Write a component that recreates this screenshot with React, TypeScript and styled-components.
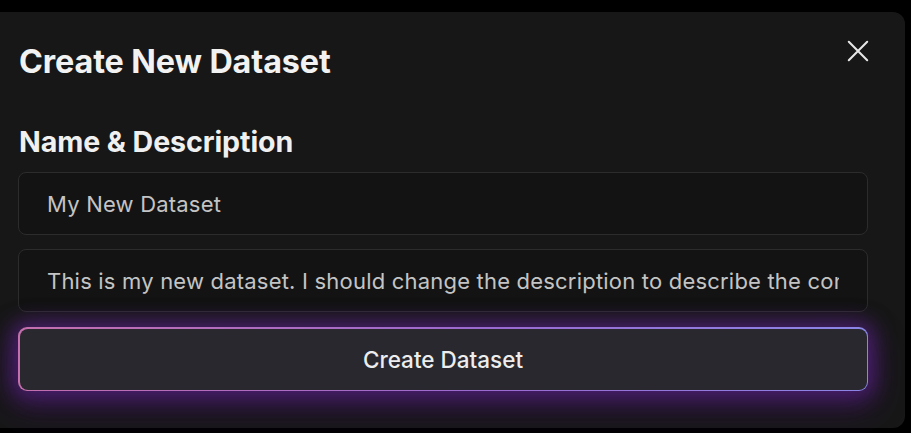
import React from "react";
import styled, { createGlobalStyle } from "styled-components";

const Global = createGlobalStyle`
  html, body { margin: 0; padding: 0; background: #000; }
  body { font-family: Inter, "Noto Sans", sans-serif; overflow: hidden; }
  * { box-sizing: border-box; }
`;

const Page = styled.div`
  width: 911px;
  height: 433px;
  padding-top: 12px;
  background: #000;
  overflow: hidden;
`;

const Card = styled.div`
  margin-left: -12px;
  width: 917px;
  height: 416px;
  background: #171717;
  border-radius: 12px;
  padding: 30px 37px 0 30px;
  display: flex;
  flex-direction: column;
`;

const Header = styled.div`
  display: flex;
  justify-content: space-between;
  align-items: flex-start;
`;

const Title = styled.h1`
  margin: 0 0 0 1px;
  font-size: 32.3px;
  line-height: 40px;
  font-weight: 700;
  color: #f2f2f2;
  letter-spacing: -0.1px;
`;

const Close = styled.button`
  background: none;
  border: none;
  padding: 0;
  margin: -4px -3px 0 0;
  width: 26px;
  height: 26px;
  color: #e6e6e6;
  display: flex;
  align-items: center;
  justify-content: center;
  cursor: pointer;
`;

const Section = styled.h2`
  margin: 43px 0 0 1px;
  font-size: 28.6px;
  line-height: 34px;
  font-weight: 700;
  color: #f0f0f0;
  letter-spacing: -0.1px;
`;

const Stack = styled.div`
  display: flex;
  flex-direction: column;
  gap: 14px;
  margin-top: 13px;
`;

const Field = styled.div`
  height: 63px;
  border: 1px solid #2c2c2c;
  border-radius: 8px;
  background: #131313;
  display: flex;
  align-items: center;
  padding: 0 28px;
  overflow: hidden;
`;

const FieldText = styled.span`
  font-size: 22px;
  color: #c4c4c4;
  white-space: nowrap;
  overflow: hidden;
  display: block;
  width: 100%;
  letter-spacing: 0.2px;
`;

const ButtonWrap = styled.div`
  margin-top: 1px;
  height: 64px;
  border-radius: 9px;
  padding: 1.5px;
  background: linear-gradient(90deg, #c46fae 0%, #9a6ad0 55%, #8b86e6 100%);
  box-shadow: 0 0 20px 6px rgba(110, 40, 170, 0.5), 0 12px 30px 8px rgba(80, 20, 130, 0.35);
`;

const Button = styled.button`
  width: 100%;
  height: 100%;
  border: none;
  border-radius: 8px;
  background: #28282e;
  color: #ededed;
  font-family: Inter, "Noto Sans", sans-serif;
  font-size: 22.5px;
  font-weight: 500;
  cursor: pointer;
`;

export default function App() {
  return (
    <>
      <Global />
      <Page>
        <Card>
          <Header>
            <Title>Create New Dataset</Title>
            <Close aria-label="Close">
              <svg width="26" height="26" viewBox="0 0 24 24" fill="none" stroke="currentColor" strokeWidth="1.9" strokeLinecap="round">
                <path d="M3.5 3.5L20.5 20.5M20.5 3.5L3.5 20.5" />
              </svg>
            </Close>
          </Header>
          <Section>Name &amp; Description</Section>
          <Stack>
            <Field><FieldText>My New Dataset</FieldText></Field>
            <Field><FieldText>This is my new dataset. I should change the description to describe the contents of this dataset.</FieldText></Field>
            <ButtonWrap><Button>Create Dataset</Button></ButtonWrap>
          </Stack>
        </Card>
      </Page>
    </>
  );
}
